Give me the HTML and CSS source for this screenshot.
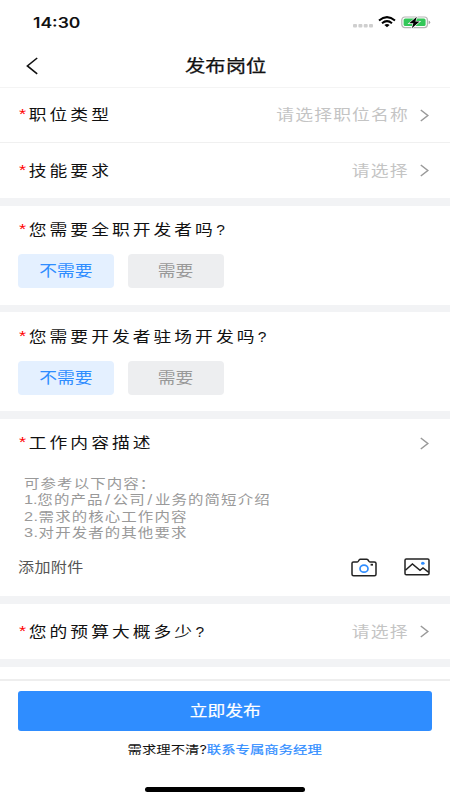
FILE: index.html
```html
<!DOCTYPE html>
<html lang="zh-CN">
<head>
<meta charset="utf-8">
<title>发布岗位</title>
<link rel="stylesheet" href="styles.css">
</head>
<body>
<div class="app">
  <div class="status">
    <span class="time wide">14:30</span>
    <div class="status-icons">
      <svg class="dots" width="20" height="4" viewBox="0 0 20 4" fill="#cfcfcf"><rect x="0" y="0" width="4" height="3.4" rx="1"/><rect x="5.4" y="0" width="4" height="3.4" rx="1"/><rect x="10.7" y="0" width="4" height="3.4" rx="1"/><rect x="16" y="0" width="4" height="3.4" rx="1"/></svg>
      <svg class="wifi" width="18" height="12" viewBox="0 0 18 12" fill="none" stroke="#000" stroke-width="2"><path d="M1 4.4Q9-2.2 17 4.4"/><path d="M4 7.2Q9 3 14 7.2"/><path d="M6.4 9Q9 7 11.6 9L9 11.3Z" fill="#000" stroke="none"/></svg>
      <svg class="battery" width="30" height="13" viewBox="0 0 30 13"><rect x=".8" y="1" width="25.6" height="10.6" rx="3" fill="#fff" stroke="#b5b5b5" stroke-width="1.2"/><rect x="2.6" y="2.5" width="22" height="7.6" rx="1.6" fill="#34c759"/><path d="M27.6 4.4Q29.2 5 29.2 6.3T27.6 8.2Z" fill="#a5a5a5"/><path d="M15.8.8L8.2 7.3H12.4L10.8 12.2L18.6 5.6H14.4Z" fill="#000" stroke="#fff" stroke-width="1.2" paint-order="stroke"/></svg>
    </div>
  </div>
  <div class="nav">
    <svg class="back" width="13" height="18" viewBox="0 0 13 18" fill="none" stroke="#111" stroke-width="1.6"><path d="M11.2 1L1.4 9L11.2 16.8"/></svg>
    <h1 class="title wide">发布岗位</h1>
  </div>
  <div class="row row-type">
    <span class="label wide"><i>*</i>职位类型</span>
    <span class="value wide">请选择职位名称</span>
    <svg class="chev" width="9" height="13" viewBox="0 0 9 13"><path d="M.8 1L7.8 6.5L.8 12"/></svg>
  </div>
  <div class="row row-skill">
    <span class="label wide"><i>*</i>技能要求</span>
    <span class="value wide">请选择</span>
    <svg class="chev" width="9" height="13" viewBox="0 0 9 13"><path d="M.8 1L7.8 6.5L.8 12"/></svg>
  </div>
  <div class="gap"></div>
  <div class="question">
    <div class="label wide"><i>*</i>您需要全职开发者吗<b>?</b></div>
    <div class="options">
      <div class="option on"><span class="wide">不需要</span></div>
      <div class="option"><span class="wide">需要</span></div>
    </div>
  </div>
  <div class="gap thin"></div>
  <div class="question onsite">
    <div class="label wide"><i>*</i>您需要开发者驻场开发吗<b>?</b></div>
    <div class="options">
      <div class="option on"><span class="wide">不需要</span></div>
      <div class="option"><span class="wide">需要</span></div>
    </div>
  </div>
  <div class="gap"></div>
  <div class="describe">
    <div class="row row-desc">
      <span class="label wide"><i>*</i>工作内容描述</span>
      <svg class="chev" width="9" height="13" viewBox="0 0 9 13"><path d="M.8 1L7.8 6.5L.8 12"/></svg>
    </div>
    <p class="hint wide">可参考以下内容：<br><em class="first">1.</em>您的产品<b>/</b>公司<b>/</b>业务的简短介绍<br><em>2.</em>需求的核心工作内容<br><em>3.</em>对开发者的其他要求</p>
    <div class="attach">
      <span class="attach-label wide">添加附件</span>
      <svg class="camera" width="26" height="19" viewBox="0 0 26 19" fill="none" stroke="#222" stroke-width="1.5"><path d="M2.5 3.9H6.2Q7 3.9 7.5 3L8.2 1.8Q8.6 1.2 9.4 1.2H15.6Q16.4 1.2 16.9 1.8L17.7 3Q18.2 3.9 19 3.9H23.3Q25 3.9 25 5.2V16.3Q25 17.8 23.5 17.8H2.6Q1 17.8 1 16.3V5.2Q1 3.9 2.5 3.9Z"/><ellipse cx="13" cy="10.7" rx="4" ry="3.5" stroke="#2f8dff" stroke-width="1.7"/><rect x="19.6" y="5.8" width="2.4" height="1.8" fill="#222" stroke="none"/></svg>
      <svg class="photo" width="26" height="18" viewBox="0 0 26 18" fill="none" stroke="#222" stroke-width="1.5"><rect x="1" y="1" width="24" height="15.8" rx="1.3"/><path d="M1.4 12.3L8.4 6L16 12.4L19 10L24.8 14.3"/><ellipse cx="18.8" cy="5.3" rx="1.8" ry="1.5" fill="#2f8dff" stroke="none"/></svg>
    </div>
  </div>
  <div class="gap"></div>
  <div class="row row-budget">
    <span class="label wide"><i>*</i>您的预算大概多少<b>?</b></span>
    <span class="value wide">请选择</span>
    <svg class="chev" width="9" height="13" viewBox="0 0 9 13"><path d="M.8 1L7.8 6.5L.8 12"/></svg>
  </div>
  <div class="gap"></div>
  <div class="rest"></div>
  <div class="footer">
    <div class="submit"><span class="wide">立即发布</span></div>
    <div class="help wide">需求理不清?<span>联系专属商务经理</span></div>
    <div class="home"></div>
  </div>
</div>
</body>
</html>
```
FILE: styles.css
```css
* { box-sizing: border-box; }
body {
  margin: 0;
  background: #fff;
  font-family: Inter, "Noto Sans CJK SC", sans-serif;
  color: #111;
}
.app {
  width: 450px;
  height: 800px;
  overflow: hidden;
  display: flex;
  flex-direction: column;
}
.app > * { flex-shrink: 0; }

/* Extended-width lettering */
.wide {
  display: inline-block;
  transform: scaleX(1.218);
  transform-origin: 0 50%;
  white-space: nowrap;
}
i, b, em { font-style: normal; font-weight: 400; }

.status {
  height: 44px;
  padding: 0 19px 0 33px;
  display: flex;
  align-items: center;
  justify-content: space-between;
}
.time { font-size: 14.4px; font-weight: 600; line-height: 20px; padding-top: 1px; }
.status-icons { display: flex; align-items: center; }
.dots { margin: 7px 5px 0 0; }
.wifi { margin-right: 5px; }
.nav {
  height: 44px;
  border-bottom: 1px solid #f4f4f4;
  padding-left: 26px;
  display: grid;
  grid-template-columns: 159px auto;
  align-items: center;
}
.title {
  margin: 0;
  font-size: 16.7px;
  font-weight: 400;
  -webkit-text-stroke: .25px #111;
  line-height: 24px;
  justify-self: start;
}

.row {
  display: flex;
  align-items: center;
  padding: 0 21px 0 19px;
}
.row-type { height: 55px; border-bottom: 1px solid #f0f0f0; }
.row-skill { height: 55px; }
.row-budget { height: 55px; }
.label { font-size: 14.6px; line-height: 22px; letter-spacing: 2.48px; }
.label i {
  display: inline-block;
  width: 8px;
  color: #f00;
  font-family: "Liberation Sans", sans-serif;
  font-size: 15px;
  line-height: 14px;
  letter-spacing: 0;
  vertical-align: 1px;
}
.label b {
  display: inline-block;
  font-family: "Liberation Sans", sans-serif;
  font-size: 15.5px;
  line-height: 16px;
  transform: scaleX(.82);
  transform-origin: 0 50%;
}
.value {
  margin-left: auto;
  margin-right: 11px;
  color: #c4c4c4;
  font-size: 14.6px;
  line-height: 22px;
  letter-spacing: .98px;
  transform-origin: 100% 50%;
}
.chev { fill: none; stroke: #999; stroke-width: 1.5; flex-shrink: 0; }
.row-desc .chev { margin-left: auto; }
.gap { height: 8px; background: #f2f3f5; }
.gap.thin { height: 7px; }

.question { height: 99px; padding: 13px 18px 0 19px; }
.question.onsite { padding-top: 14px; }
.question .label { display: block; width: max-content; }
.options { display: flex; gap: 14px; margin: 13px 0 0 -1px; }
.onsite .options { margin-top: 12.5px; }
.option {
  width: 96px;
  height: 34px;
  border-radius: 4px;
  background: #edeef0;
  color: #999;
  font-size: 14.6px;
  line-height: 20px;
  display: flex;
  align-items: center;
  justify-content: center;
}
.option.on { background: #e4f0ff; color: #2f8dff; }
.option .wide, .submit .wide, .help { transform-origin: 50% 50%; }

.describe { height: 177px; }
.row-desc { height: 48px; }
.hint {
  margin: 9px 0 0 24px;
  color: #999;
  font-size: 12.7px;
  line-height: 16.3px;
  letter-spacing: .9px;
}
.hint b { margin-right: 1px; margin-left: 1px; }
.hint em { font-family: "Liberation Sans", sans-serif; font-size: 13.4px; letter-spacing: .4px; }
.hint em.first { letter-spacing: -.1px; }
.attach {
  display: flex;
  align-items: center;
  height: 24px;
  margin-top: 14px;
  padding: 0 20px 0 18px;
}
.attach-label { color: #555; font-size: 13.2px; letter-spacing: .3px; padding-bottom: 2px; }
.camera { margin-left: auto; margin-right: 27px; }

.rest { height: 12px; }
.footer {
  flex: 1;
  border-top: 2px solid #eee;
  background: #fff;
  padding: 10px 18px 0;
  display: flex;
  flex-direction: column;
  align-items: center;
}
.submit {
  align-self: stretch;
  height: 40px;
  border-radius: 3px;
  background: #2f8dff;
  color: #fff;
  font-size: 14.6px;
  line-height: 20px;
  -webkit-text-stroke: .2px #fff;
  display: flex;
  align-items: center;
  justify-content: center;
}
.help { margin-top: 10px; font-size: 11.8px; line-height: 18px; }
.help span { color: #2f8dff; -webkit-text-stroke: .2px #2f8dff; }
.home { width: 160px; height: 5px; border-radius: 3px; background: #000; margin-top: 28px; }
```
